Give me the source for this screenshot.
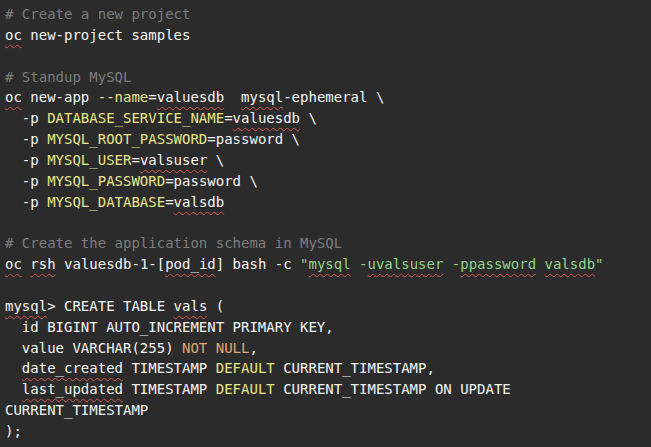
import React from "react";

const C = {
  cm: "text-[#7d7d7d]",
  kw: "text-[#e8e68a]",
  str: "text-[#92d38e]",
  org: "text-[#e3a871]",
};

function W({ children }) {
  return (
    <span className="underline decoration-wavy decoration-[#d9534f] decoration-1 underline-offset-[4px]">
      {children}
    </span>
  );
}

function Y({ children }) {
  return <span className={C.kw}>{children}</span>;
}

const lines = [
  <span className={C.cm}># Create a new project</span>,
  <>
    <W>oc</W> new-project samples
  </>,
  null,
  <span className={C.cm}># Standup MySQL</span>,
  <>
    <W>oc</W> new-app <Y>--name</Y>=<W>valuesdb</W>{"  "}<W>mysql</W>-ephemeral \
  </>,
  <>
    {"  "}-p <Y>DATABASE_SERVICE_NAME</Y>=<W>valuesdb</W> \
  </>,
  <>
    {"  "}-p <Y>MYSQL_ROOT_PASSWORD</Y>=password \
  </>,
  <>
    {"  "}-p <Y>MYSQL_USER</Y>=<W>valsuser</W> \
  </>,
  <>
    {"  "}-p <Y>MYSQL_PASSWORD</Y>=password \
  </>,
  <>
    {"  "}-p <Y>MYSQL_DATABASE</Y>=<W>valsdb</W>
  </>,
  null,
  <span className={C.cm}># Create the application schema in MySQL</span>,
  <>
    <W>oc</W> <W>rsh</W> valuesdb-1-[<W>pod_id</W>] bash -c{" "}
    <span className={C.str}>
      "<W>mysql</W> -<W>uvalsuser</W> -<W>ppassword</W> <W>valsdb</W>"
    </span>
  </>,
  null,
  <>
    <W>mysql</W>&gt; CREATE TABLE <W>vals</W> (
  </>,
  <>{"  "}id BIGINT AUTO_INCREMENT PRIMARY KEY,</>,
  <>
    {"  "}value VARCHAR(255) <span className={C.org}>NOT NULL</span>,
  </>,
  <>
    {"  "}<W>date_created</W> TIMESTAMP <Y>DEFAULT</Y> CURRENT_TIMESTAMP,
  </>,
  <>
    {"  "}<W>last_updated</W> TIMESTAMP <Y>DEFAULT</Y> CURRENT_TIMESTAMP ON UPDATE
  </>,
  <>CURRENT_TIMESTAMP</>,
  <>);</>,
];

export default function App() {
  return (
    <div className="w-[651px] h-[447px] overflow-hidden bg-[#2b2b2b] pt-[4px] pl-[5px]">
      <pre className="font-['DejaVu_Sans_Mono',monospace] text-[14px] leading-[20.85px] text-[#f5f5f5] whitespace-pre">
        {lines.map((l, i) => (
          <div key={i} className="h-[20.85px]">
            {l}
          </div>
        ))}
      </pre>
    </div>
  );
}
